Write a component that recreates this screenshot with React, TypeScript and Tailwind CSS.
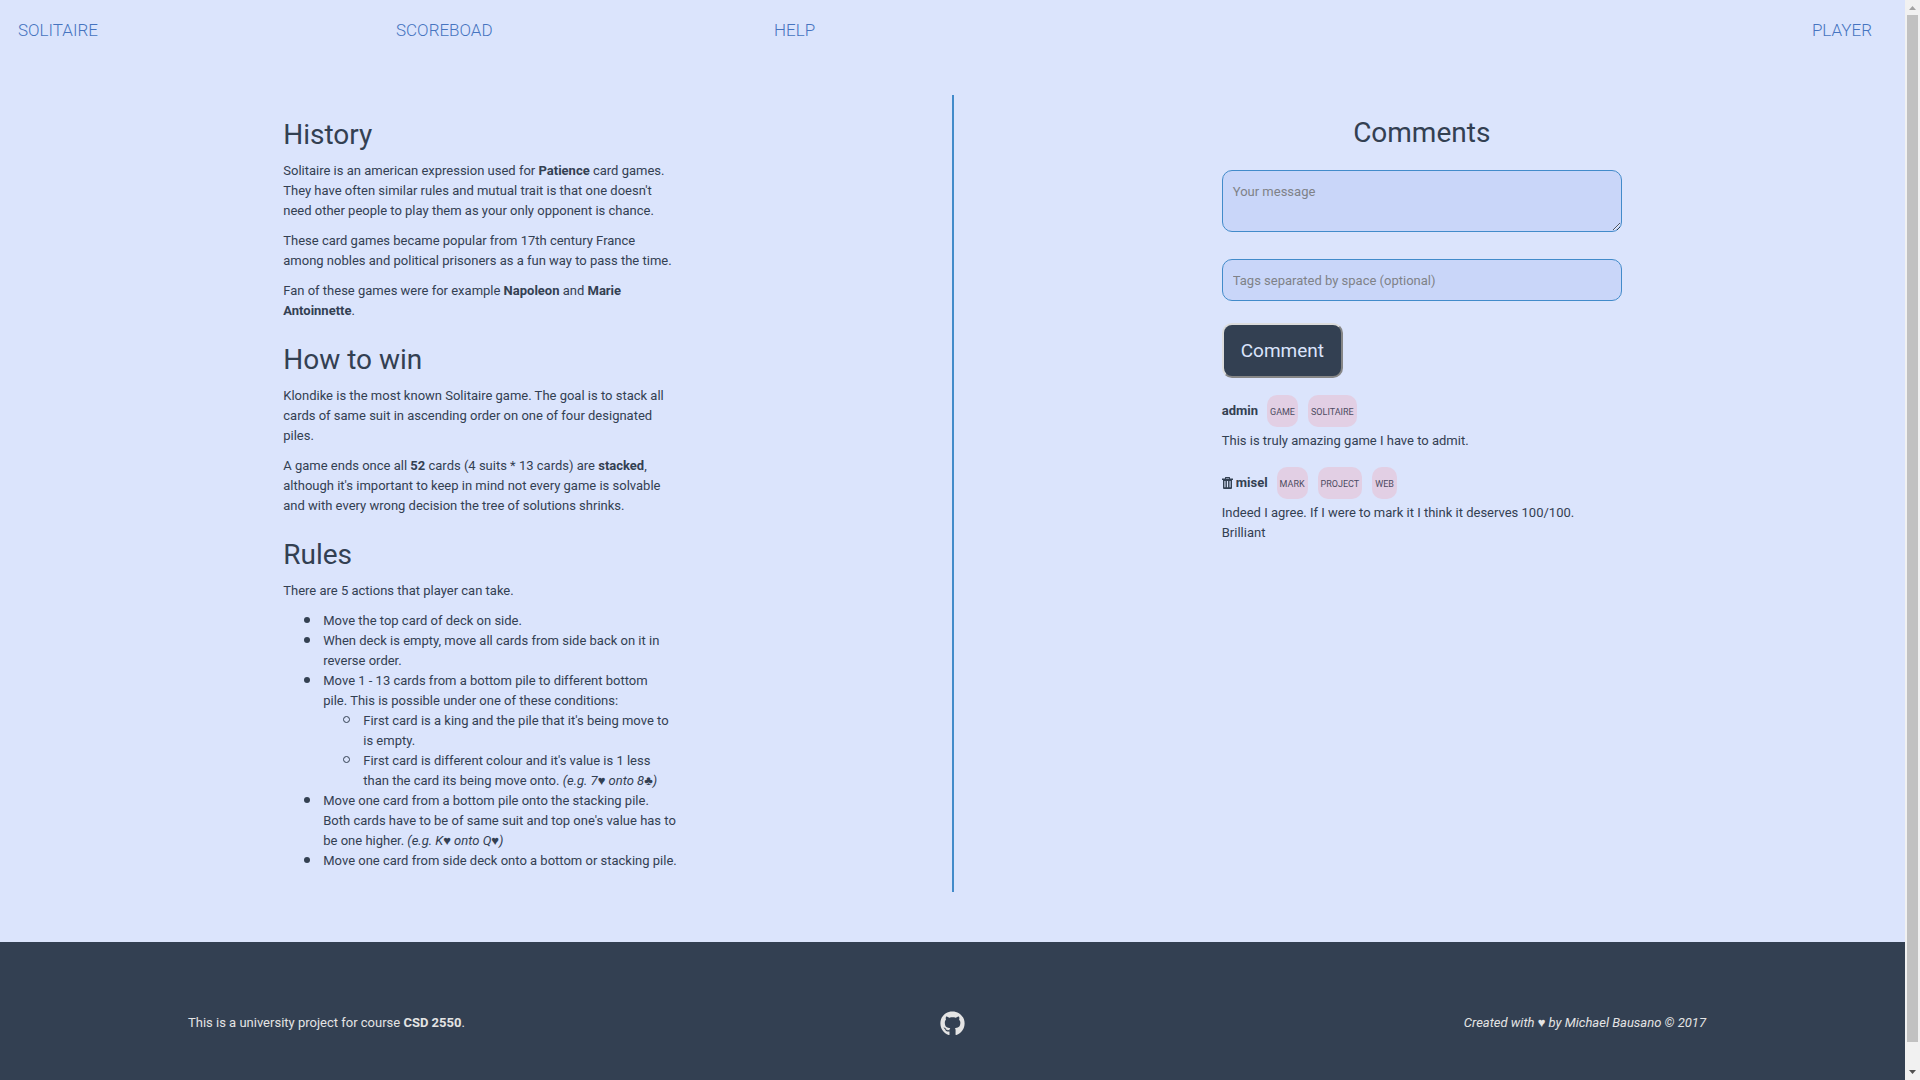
import type { ReactNode } from "react";
import { FaGithub } from "react-icons/fa";

const navLinks = ["Solitaire", "Scoreboad", "Help"];

const comments = [
  {
    author: "admin",
    own: false,
    tags: ["Game", "Solitaire"],
    lines: ["This is truly amazing game I have to admit."],
  },
  {
    author: "misel",
    own: true,
    tags: ["Mark", "Project", "Web"],
    lines: ["Indeed I agree. If I were to mark it I think it deserves 100/100.", "Brilliant"],
  },
];

function TrashIcon() {
  return (
    <svg viewBox="0 0 11 12" className="h-3 w-[11px]" fill="currentColor" aria-hidden="true">
      <path
        fillRule="evenodd"
        d="M3 0.5Q3 0 3.5 0H7.5Q8 0 8 0.5V1.5H11V3H10V11Q10 12 9 12H2Q1 12 1 11V3H0V1.5H3ZM4 0.9V1.5H7V0.9ZM2.4 4V10.2H3.5V4ZM4.9 4V10.2H6.1V4ZM7.5 4V10.2H8.6V4Z"
      />
    </svg>
  );
}

function Heading({ children }: { children: ReactNode }) {
  return <h2 className="mt-[21px] mb-[9px] text-[28px] leading-[35px]">{children}</h2>;
}

function Paragraph({ children }: { children: ReactNode }) {
  return <p className="mb-2.5">{children}</p>;
}

function Rule({ children }: { children: ReactNode }) {
  return (
    <li className="before:float-left before:mt-1.5 before:mr-[13px] before:-ml-[19px] before:size-1.5 before:rounded-full before:bg-current">
      {children}
    </li>
  );
}

function SubRule({ children }: { children: ReactNode }) {
  return (
    <li className="before:float-left before:mt-[5px] before:mr-[13px] before:-ml-5 before:size-[7px] before:rounded-full before:border before:border-current">
      {children}
    </li>
  );
}

function Guide() {
  return (
    <article className="w-[400px] pt-px">
      <Heading>History</Heading>
      <Paragraph>
        Solitaire is an american expression used for <b>Patience</b> card games.
        <br />
        They have often similar rules and mutual trait is that one doesn't
        <br />
        need other people to play them as your only opponent is chance.
      </Paragraph>
      <Paragraph>
        These card games became popular from 17th century France
        <br />
        among nobles and political prisoners as a fun way to pass the time.
      </Paragraph>
      <Paragraph>
        Fan of these games were for example <b>Napoleon</b> and <b>Marie<br />Antoinnette</b>.
      </Paragraph>
      <Heading>How to win</Heading>
      <Paragraph>
        Klondike is the most known Solitaire game. The goal is to stack all
        <br />
        cards of same suit in ascending order on one of four designated
        <br />
        piles.
      </Paragraph>
      <Paragraph>
        A game ends once all <b>52</b> cards (4 suits * 13 cards) are <b>stacked</b>,
        <br />
        although it's important to keep in mind not every game is solvable
        <br />
        and with every wrong decision the tree of solutions shrinks.
      </Paragraph>
      <Heading>Rules</Heading>
      <Paragraph>There are 5 actions that player can take.</Paragraph>
      <ul className="mb-2.5 pl-10">
        <Rule>Move the top card of deck on side.</Rule>
        <Rule>
          When deck is empty, move all cards from side back on it in
          <br />
          reverse order.
        </Rule>
        <Rule>
          Move 1 - 13 cards from a bottom pile to different bottom
          <br />
          pile. This is possible under one of these conditions:
          <ul className="pl-10">
            <SubRule>
              First card is a king and the pile that it's being move to
              <br />
              is empty.
            </SubRule>
            <SubRule>
              First card is different colour and it's value is 1 less
              <br />
              than the card its being move onto. <i>(e.g. 7♥ onto 8♣)</i>
            </SubRule>
          </ul>
        </Rule>
        <Rule>
          Move one card from a bottom pile onto the stacking pile.
          <br />
          Both cards have to be of same suit and top one's value has to
          <br />
          be one higher. <i>(e.g. K♥ onto Q♥)</i>
        </Rule>
        <Rule>Move one card from side deck onto a bottom or stacking pile.</Rule>
      </ul>
    </article>
  );
}

function Comments() {
  return (
    <section className="w-[400px]">
      <h2 className="mt-5 text-center text-[28px] leading-[35px]">Comments</h2>
      <form className="mt-5">
        <textarea
          aria-label="Your message"
          placeholder="Your message"
          className="block h-[62px] w-full rounded-[10px] border border-[#428bca] bg-[#c9d6f9] px-2.5 py-[11px] placeholder:text-[#7f8288]"
        />
        <input
          type="text"
          aria-label="Tags separated by space (optional)"
          placeholder="Tags separated by space (optional)"
          className="mt-[27px] block h-[42px] w-full rounded-[10px] border border-[#428bca] bg-[#c9d6f9] px-2.5 placeholder:text-[#7f8288]"
        />
        <button
          type="button"
          className="mt-[22px] block h-[55px] rounded-[10px] border-2 border-t-[#dcdcdc] border-r-[#868686] border-b-[#868686] border-l-[#dcdcdc] bg-[#334052] px-[17px] text-[19px] text-[#dbe4fc]"
        >
          Comment
        </button>
      </form>
      <div className="mt-[17px] flex flex-col gap-4">
        {comments.map((c) => (
          <article key={c.author}>
            <header className="mb-1 flex items-center">
              {c.own && (
                <button type="button" aria-label="Delete comment" className="mr-[3px]">
                  <TrashIcon />
                </button>
              )}
              <b>{c.author}</b>
              <ul className="ml-[9px] flex gap-2.5">
                {c.tags.map((t) => (
                  <li
                    key={t}
                    className="h-8 rounded-[10px] bg-[#e2cfe4] px-[3px] text-[9px] leading-[35px] text-[#4d4c62] uppercase"
                  >
                    {t}
                  </li>
                ))}
              </ul>
            </header>
            {c.lines.map((line) => (
              <p key={line}>{line}</p>
            ))}
          </article>
        ))}
      </div>
    </section>
  );
}

function Scrollbar() {
  return (
    <div className="flex w-[15px] shrink-0 flex-col items-center justify-between bg-[#f1f1f1]" aria-hidden="true">
      <svg viewBox="0 0 15 15" className="h-[15px] w-[15px]">
        <path d="M4 10H11L7.5 6Z" fill="#a3a3a3" />
      </svg>
      <div className="mb-[23px] w-[11px] flex-1 bg-[#c1c1c1]" />
      <svg viewBox="0 0 15 15" className="h-[15px] w-[15px]">
        <path d="M4 5H11L7.5 9Z" fill="#505050" />
      </svg>
    </div>
  );
}

export default function App() {
  return (
    <div className="flex h-screen overflow-hidden bg-[#dbe4fc] font-['Roboto','Liberation_Sans',sans-serif] text-[13px] leading-5 text-[#334052]">
      <div className="min-w-0 flex-1 overflow-hidden">
        <nav className="flex h-[95px] pt-[18px] pl-[15px] text-[17px] leading-6 font-light text-[#4674c0] uppercase">
          {navLinks.map((l) => (
            <div key={l} className="w-1/5 pl-[3px]">
              <a href="#">{l}</a>
            </div>
          ))}
          <a href="#" className="mr-[33px] ml-auto">
            Player
          </a>
        </nav>
        <main className="flex">
          <div className="flex flex-1 justify-center pb-[11px] pl-[15px]">
            <Guide />
          </div>
          <div className="w-0.5 bg-[#428bca]" />
          <div className="flex flex-1 justify-center pr-[15px]">
            <Comments />
          </div>
        </main>
        <footer className="mt-[50px] grid h-[162px] grid-cols-3 items-center bg-[#334052] text-[#e4e4e4]">
          <p className="pl-[188px]">
            This is a university project for course <b>CSD 2550</b>.
          </p>
          <a href="#" aria-label="GitHub" className="justify-self-center">
            <FaGithub className="size-[25px]" />
          </a>
          <p className="pr-[199px] text-right">
            <i>Created with ♥ by Michael Bausano © 2017</i>
          </p>
        </footer>
      </div>
      <Scrollbar />
    </div>
  );
}
